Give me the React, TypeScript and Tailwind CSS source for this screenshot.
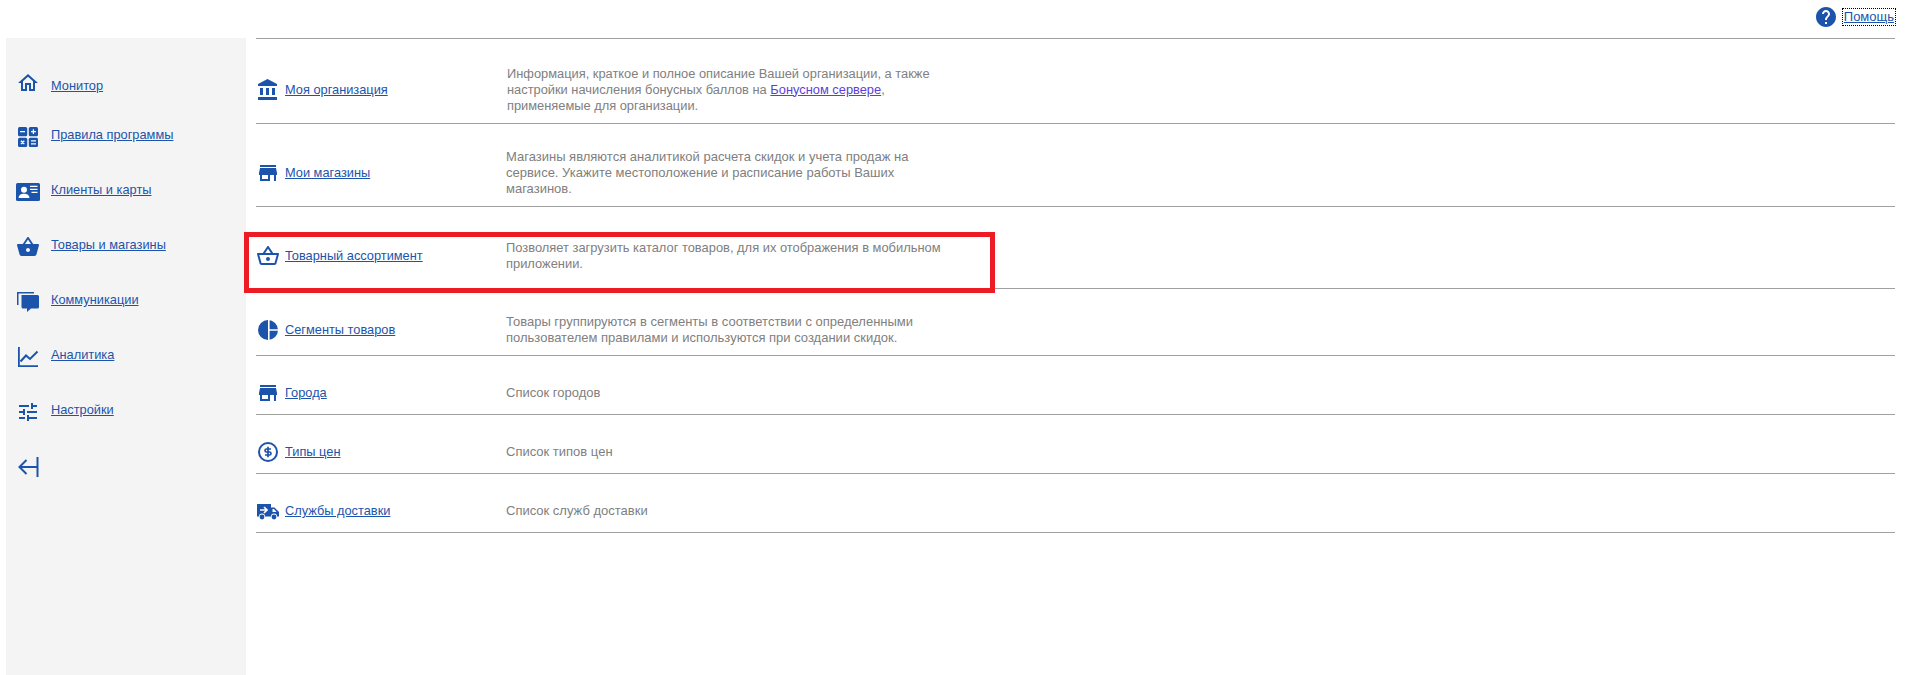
import type { ReactNode } from "react";

const Icon = ({ children, size = 24 }: { children: ReactNode; size?: number }) => (
  <svg width={size} height={size} viewBox="0 0 24 24" fill="#1c54ab" className="shrink-0">
    {children}
  </svg>
);

const storePath = "M20 4H4v2h16V4zm1 10v-2l-1-5H4l-1 5v2h1v6h10v-6h4v6h2v-6h1zm-9 4H6v-4h6v4z";

const HomeIcon = () => (
  <Icon>
    <path d="M12 5.69l5 4.5V18h-2v-6H9v6H7v-7.81l5-4.5M12 3L2 12h3v8h6v-6h2v6h6v-8h3L12 3z" />
  </Icon>
);

const CalcIcon = () => (
  <Icon>
    <rect x="2" y="2" width="9.2" height="9.2" rx="1.5" />
    <rect x="12.8" y="2" width="9.2" height="9.2" rx="1.5" />
    <rect x="2" y="12.8" width="9.2" height="9.2" rx="1.5" />
    <rect x="12.8" y="12.8" width="9.2" height="9.2" rx="1.5" />
    <path d="M4 6.6h5M15 6.6h5M17.4 4.2v4.8M4.9 15.7l3.4 3.4M8.3 15.7l-3.4 3.4M15 15.9h5M15 18.9h5" stroke="#fff" strokeWidth="1.3" fill="none" />
  </Icon>
);

const CardIcon = () => (
  <Icon>
    <rect x="0" y="3" width="24" height="18" rx="1.5" />
    <circle cx="8" cy="9.8" r="3" fill="#fff" />
    <path d="M2.6 18c0-2.8 2.4-4.2 5.4-4.2s5.400 1.400 5.400 4.200z" fill="#fff" />
    <path d="M14 6.400h7.500M14 9.400h7.500M15.500 12.400h6" stroke="#fff" strokeWidth="1.300" />
  </Icon>
);

const BasketIcon = () => (
  <Icon>
    <path d="M17.21 9l-4.38-6.56c-.19-.28-.51-.42-.83-.42-.32 0-.64.14-.83.43L6.79 9H2c-.55 0-1 .45-1 1 0 .09.01.18.04.27l2.54 9.27c.23.84 1 1.46 1.92 1.46h13c.92 0 1.69-.62 1.93-1.46l2.54-9.27L23 10c0-.55-.45-1-1-1h-4.79zM9 9l3-4.4L15 9H9zm3 8c-1.1 0-2-.9-2-2s.9-2 2-2 2 .9 2 2-.9 2-2 2z" />
  </Icon>
);

const BasketOutlineIcon = () => (
  <Icon>
    <path d="M22 9h-4.79l-4.38-6.56c-.19-.28-.51-.42-.83-.42s-.64.14-.83.43L6.79 9H2c-.55 0-1 .45-1 1 0 .09.01.18.04.27l2.54 9.27c.23.84 1 1.46 1.92 1.46h13c.92 0 1.69-.62 1.93-1.46l2.54-9.27L23 10c0-.55-.45-1-1-1zM12 4.800L14.800 9H9.200L12 4.800zM18.500 19l-12.990.010L3.310 11H20.700l-2.200 8zM12 13c-1.100 0-2 .9-2 2s.9 2 2 2 2-.9 2-2-.9-2-2-2z" />
  </Icon>
);

const ChatIcon = () => (
  <Icon>
    <path d="M1 2h17v1.500H2.500V15H1z" />
    <path d="M5.500 5H21.500a1.500 1.500 0 0 1 1.500 1.500V17a1.500 1.500 0 0 1-1.500 1.500H15l-4 3.500v-3.500H7a1.500 1.500 0 0 1-1.500-1.500z" />
  </Icon>
);

const ChartIcon = () => (
  <Icon>
    <path d="M2 2h1.800v18.200H22V22H2z" />
    <path d="M4.500 16.500L10 10.500l4 3.500 7.500-7.500" fill="none" stroke="#1c54ab" strokeWidth="2" />
  </Icon>
);

const TuneIcon = () => (
  <Icon>
    <path d="M3 17v2h6v-2H3zM3 5v2h10V5H3zm10 16v-2h8v-2h-8v-2h-2v6h2zM7 9v2H3v2h4v2h2V9H7zm14 4v-2H11v2h10zm-6-4h2V7h4V5h-4V3h-2v6z" />
  </Icon>
);

const CollapseIcon = () => (
  <Icon>
    <path d="M20.500 2h2v20h-2z" />
    <path d="M21 12H3.500M10.500 5l-7 7 7 7" fill="none" stroke="#1c54ab" strokeWidth="2" />
  </Icon>
);

const BankIcon = () => (
  <Icon>
    <path d="M4 10v7h3v-7H4zm6 0v7h3v-7h-3zM2 22h19v-3H2v3zm14-12v7h3v-7h-3zm-4.500-9L2 6v2h19V6l-9.500-5z" />
  </Icon>
);

const StoreIcon = () => (
  <Icon>
    <path d={storePath} />
  </Icon>
);

const PieIcon = () => (
  <Icon>
    <circle cx="12" cy="12" r="10" />
    <path d="M12.800 1.500V22.500M12.800 12H22.500" stroke="#fff" strokeWidth="1.600" fill="none" />
  </Icon>
);

const DollarIcon = () => (
  <Icon>
    <circle cx="12" cy="12" r="9" fill="none" stroke="#1c54ab" strokeWidth="2" />
    <path d="M15 9h-4.500a1.500 1.500 0 0 0 0 3h3a1.500 1.500 0 0 1 0 3H9M12 6.800v10.400" fill="none" stroke="#1c54ab" strokeWidth="1.700" />
  </Icon>
);

const TruckIcon = () => (
  <Icon>
    <path d="M1 5h14v3.500h3.500L23 13v4.500h-2a3 3 0 0 0-6 0H9a3 3 0 0 0-6 0H1z" />
    <circle cx="6" cy="18" r="2.400" />
    <circle cx="18" cy="18" r="2.400" />
    <path d="M4 11h7M8 8l3 3-3 3" fill="none" stroke="#fff" strokeWidth="1.700" />
    <path d="M16.500 10h1.500l2.500 3h-4z" fill="#fff" />
  </Icon>
);

const HelpIcon = () => (
  <Icon size={24}>
    <path d="M12 2C6.480 2 2 6.480 2 12s4.480 10 10 10 10-4.480 10-10S17.520 2 12 2zm1 17h-2v-2h2v2zm2.070-7.750l-.9.920C13.450 12.900 13 13.500 13 15h-2v-.5c0-1.100.45-2.100 1.170-2.830l1.240-1.260c.37-.36.59-.86.59-1.410 0-1.100-.9-2-2-2s-2 .9-2 2H8c0-2.210 1.790-4 4-4s4 1.790 4 4c0 .88-.36 1.680-.93 2.250z" />
  </Icon>
);

const linkClass = "text-[#1c54ab] underline";

const navItems = [
  { label: "Монитор", icon: <HomeIcon />, rowClass: "h-[50px] pt-[2px]", iconClass: "-mt-[6px]" },
  { label: "Правила программы", icon: <CalcIcon />, rowClass: "h-[50px]", iconClass: "mt-1" },
  { label: "Клиенты и карты", icon: <CardIcon />, rowClass: "h-[60px]", iconClass: "mt-1" },
  { label: "Товары и магазины", icon: <BasketIcon />, rowClass: "h-[50px]", iconClass: "mt-1" },
  { label: "Коммуникации", icon: <ChatIcon />, rowClass: "h-[60px]", iconClass: "mt-1" },
  { label: "Аналитика", icon: <ChartIcon />, rowClass: "h-[50px]", iconClass: "mt-1" },
  { label: "Настройки", icon: <TuneIcon />, rowClass: "h-[60px]", iconClass: "mt-1" },
];

const rows: { label: string; icon: ReactNode; rowClass: string; desc: ReactNode; descClass?: string }[] = [
  {
    label: "Моя организация",
    icon: <BankIcon />,
    rowClass: "h-[85px] pt-[17px]",
    descClass: "ml-px text-[12.85px]",
    desc: (
      <>
        Информация, краткое и полное описание Вашей организации, а также настройки начисления бонусных баллов на{" "}
        <a href="#" className="text-[#5b3fd6] underline">Бонусном сервере</a>, применяемые для организации.
      </>
    ),
  },
  {
    label: "Мои магазины",
    icon: <StoreIcon />,
    rowClass: "h-[83px] pt-[15px]",
    desc: "Магазины являются аналитикой расчета скидок и учета продаж на сервисе. Укажите местоположение и расписание работы Ваших магазинов.",
  },
  {
    label: "Товарный ассортимент",
    icon: <BasketOutlineIcon />,
    rowClass: "h-[82px] pt-[17px]",
    descClass: "text-[12.9px]",
    desc: "Позволяет загрузить каталог товаров, для их отображения в мобильном приложении.",
  },
  {
    label: "Сегменты товаров",
    icon: <PieIcon />,
    rowClass: "h-[67px] pt-[15px]",
    desc: "Товары группируются в сегменты в соответствии с определенными пользователем правилами и используются при создании скидок.",
  },
  {
    label: "Города",
    icon: <StoreIcon />,
    rowClass: "h-[59px] pt-[16px]",
    desc: "Список городов",
  },
  {
    label: "Типы цен",
    icon: <DollarIcon />,
    rowClass: "h-[59px] pt-[16px]",
    desc: "Список типов цен",
  },
  {
    label: "Службы доставки",
    icon: <TruckIcon />,
    rowClass: "h-[59px] pt-[16px]",
    desc: "Список служб доставки",
  },
];

export default function App() {
  return (
    <div className="relative h-[675px] overflow-hidden bg-white font-['Liberation_Sans',Arial,sans-serif] text-[12.8px] leading-4">
      {/* Top bar */}
      <div className="flex h-[38px] items-start justify-end gap-[5px] pr-[18px] pt-[5px]">
        <HelpIcon />
        <a href="#" className={`${linkClass} mt-[4px] px-px text-[13px] outline-1 outline-dotted outline-black`}>Помощь</a>
      </div>

      <div className="flex h-[637px]">
        {/* Sidebar */}
        <aside className="ml-[6px] w-[240px] shrink-0 bg-[#f4f4f4] pl-[10px] pt-[22px]">
          {navItems.map((item) => (
            <div key={item.label} className={`flex items-center gap-[11px] ${item.rowClass}`}>
              <span className={`flex ${item.iconClass}`}>{item.icon}</span>
              <a href="#" className={linkClass}>{item.label}</a>
            </div>
          ))}
          <div className="mt-[15px] flex">
            <CollapseIcon />
          </div>
        </aside>

        {/* Main list */}
        <main className="ml-[10px] mr-[18px] flex-1">
          <div className="border-t border-[#a0a0a0]">
            {rows.map((row) => (
              <div key={row.label} className={`flex items-center border-b border-[#a0a0a0] ${row.rowClass}`}>
                <div className="flex w-[250px] shrink-0 items-center gap-[5px]">
                  {row.icon}
                  <a href="#" className={linkClass}>{row.label}</a>
                </div>
                <p className={`w-[440px] text-[#808080] ${row.descClass ?? "text-[13px]"}`}>{row.desc}</p>
              </div>
            ))}
          </div>
        </main>
      </div>

      {/* Red annotation frame */}
      <div className="absolute left-[244px] top-[232px] h-[61px] w-[751px] border-[5px] border-[#ed1c24]" />
    </div>
  );
}
